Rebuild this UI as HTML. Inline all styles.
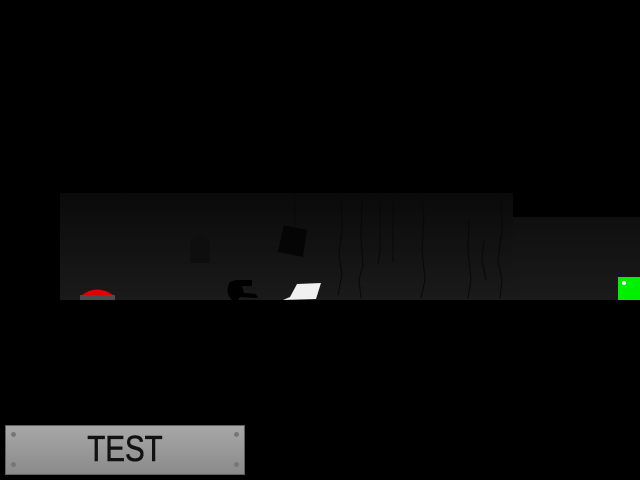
<!DOCTYPE html>
<html><head><style>
html,body{margin:0;padding:0;background:#000;width:640px;height:480px;overflow:hidden;position:relative}
.a{position:absolute}
</style></head><body>
<div class="a" style="left:60px;top:193px;width:453px;height:107px;background:linear-gradient(#0a0a0a,#1a1a1a)"></div>
<div class="a" style="left:513px;top:217px;width:127px;height:83px;background:linear-gradient(#0f0f0f,#1a1a1a)"></div>
<svg class="a" style="left:0;top:0" width="640" height="480">
<g stroke="#080808" stroke-width="1" fill="none">
<path d="M341 197 L342 230 L339 255 L342 275 L338 295"/>
<path d="M362 197 L361 240 L363 265 L359 280 L361 298"/>
<path d="M380 197 L380 250 L378 265"/>
<path d="M393 197 L393 262"/>
<path d="M421 197 L424 215 L422 250 L425 280 L421 298"/>
<path d="M469 220 L468 250 L471 280 L468 298"/>
<path d="M484 240 L482 260 L486 280"/>
<path d="M501 197 L502 230 L498 260 L502 280 L500 298"/>
<path d="M295 193 L295 226"/>
</g>
<path d="M190 263 L190 242 Q200 229 210 242 L210 263 Z" fill="#0e0e0e"/>
<path d="M284 225 L307 230 L303 257 L278 252 Z" fill="#050505"/>
<rect x="80" y="295" width="35" height="5" fill="#4a4a4a"/>
<path d="M82 295 Q97 284 113 295 Z" fill="#e00000"/>
<path d="M230 282 Q224 292 232 300 L238 300 L240 297 L258 298 L256 294 L244 293 L242 286 L252 286 L252 280 L236 280 Z" fill="#000"/>
<path d="M297 284 L321 283 L316 299 L283 300 L290 297 Z" fill="#f0f0f0"/>
<rect x="618" y="277" width="22" height="23" fill="#00f000"/>
<circle cx="624" cy="283" r="2" fill="#fff"/>
</svg>
<div class="a" style="left:5px;top:425px;width:240px;height:50px;background:linear-gradient(#a8a8a8,#8a8a8a);box-shadow:inset 0 0 0 1px #606060"></div>
<div class="a" style="left:5px;top:425px;width:240px;height:50px;text-align:center;font:normal 36px/48px 'Liberation Sans',sans-serif;color:#111;transform:scaleX(0.82);-webkit-text-stroke:0.6px #111">TEST</div>
<div class="a" style="left:11px;top:432px;width:5px;height:5px;border-radius:50%;background:#777"></div>
<div class="a" style="left:11px;top:462px;width:5px;height:5px;border-radius:50%;background:#777"></div>
<div class="a" style="left:234px;top:432px;width:5px;height:5px;border-radius:50%;background:#777"></div>
<div class="a" style="left:234px;top:462px;width:5px;height:5px;border-radius:50%;background:#777"></div>
</body></html>
